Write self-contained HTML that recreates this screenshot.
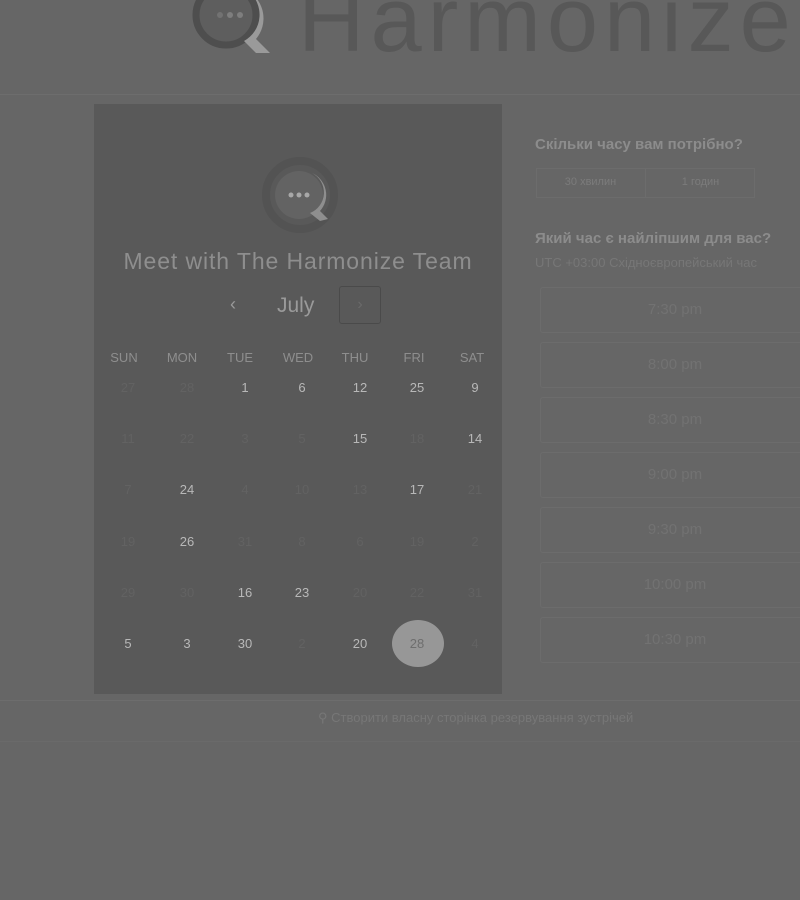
<!DOCTYPE html>
<html><head><meta charset="utf-8"><style>
body{margin:0;width:800px;height:900px;background:#666;font-family:"Liberation Sans",sans-serif;position:relative;overflow:hidden}
.a{position:absolute}
.panel{left:94px;top:104px;width:408px;height:590px;background:#595959}
.hd{font-size:13px;color:#8e8e8e;width:58px;text-align:center}
.d{font-size:13px;width:40px;text-align:center;color:#626262}
.b{color:#b8b8b8}
.slot{left:540px;width:270px;height:46px;border:1px solid #6c6c6c;border-radius:3px;box-sizing:border-box;color:#727272;font-size:15px;text-align:center;line-height:44px}
</style></head><body>
<svg class="a" style="left:178px;top:-25px" width="100" height="85"><circle cx="48" cy="40" r="30" fill="#5e5e5e" stroke="#4e4e4e" stroke-width="7"/><path d="M70 16 A32 32 0 0 1 78 64 L92 78 L78 78 L66 66 A30 30 0 0 0 70 16Z" fill="#9a9a9a"/><circle cx="42" cy="40" r="3" fill="#727272"/><circle cx="52" cy="40" r="3" fill="#7e7e7e"/><circle cx="62" cy="40" r="3" fill="#7e7e7e"/></svg>
<div class="a" style="left:298px;top:-32px;font-size:92px;color:#585858;letter-spacing:6px;white-space:nowrap">Harmonize</div>
<div class="a" style="left:0;top:94px;width:800px;height:1px;background:#6d6d6d"></div>
<div class="a" style="left:0;top:700px;width:800px;height:40px;border-top:1px solid #6d6d6d;border-bottom:1px solid #6a6a6a"></div>
<div class="a panel"></div>
<svg class="a" style="left:256px;top:155px" width="90" height="80"><circle cx="44" cy="40" r="34" fill="none" stroke="#535353" stroke-width="8"/><circle cx="43" cy="40" r="24" fill="#636363"/><path d="M56 18 A24 24 0 0 1 64 56 L72 64 L64 66 L54 58 A22 22 0 0 0 56 18Z" fill="#8e8e8e"/><circle cx="35" cy="40" r="2.5" fill="#a8a8a8"/><circle cx="43" cy="40" r="2.5" fill="#a8a8a8"/><circle cx="51" cy="40" r="2.5" fill="#a8a8a8"/></svg>
<div class="a" style="left:94px;top:248px;width:408px;text-align:center;font-size:23px;color:#8e8e8e;letter-spacing:0.9px;white-space:nowrap">Meet with The Harmonize Team</div>
<div class="a" style="left:230px;top:294px;font-size:18px;color:#9a9a9a">‹</div>
<div class="a" style="left:277px;top:294px;font-size:21px;color:#9a9a9a">July</div>
<div class="a" style="left:339px;top:286px;width:40px;height:36px;border:1.5px solid #4a4a4a;border-radius:3px;color:#6a6a6a;text-align:center;line-height:36px">›</div>
<div class="a hd" style="left:95px;top:350px">SUN</div><div class="a hd" style="left:153px;top:350px">MON</div><div class="a hd" style="left:211px;top:350px">TUE</div><div class="a hd" style="left:269px;top:350px">WED</div><div class="a hd" style="left:326px;top:350px">THU</div><div class="a hd" style="left:385px;top:350px">FRI</div><div class="a hd" style="left:443px;top:350px">SAT</div>
<div class="a" style="left:392px;top:620px;width:52px;height:47px;border-radius:50%;background:#979797"></div>
<div id="g"></div>
<script>
var rows=[[387,["27","28","1b","6b","12b","25b","9b"]],[438,["11","22","3","5","15b","18","14b"]],[489,["7","24b","4","10","13","17b","21"]],[541,["19","26b","31","8","6","19","2"]],[592,["29","30","16b","23b","20","22","31"]],[643,["5b","3b","30b","2","20b","28x","4"]]];
var xs=[108,167,225,282,340,397,455],h="";
rows.forEach(function(r){r[1].forEach(function(t,i){var c=t.slice(-1);var b=c=="b",x=c=="x";var n=(b||x)?t.slice(0,-1):t;h+='<div class="a d'+(b?' b':'')+'" style="left:'+xs[i]+'px;top:'+(r[0]-7)+'px'+(x?';color:#6e6e6e':'')+'">'+n+'</div>'});});
document.getElementById("g").innerHTML=h;
</script>
<div class="a" style="left:535px;top:136px;font-size:15px;font-weight:bold;color:#8c8c8c">Скільки часу вам потрібно?</div>
<div class="a" style="left:536px;top:168px;width:219px;height:30px;border:1px solid #6c6c6c;box-sizing:border-box"></div>
<div class="a" style="left:645px;top:168px;width:1px;height:30px;background:#6c6c6c"></div>
<div class="a" style="left:536px;top:176px;width:109px;text-align:center;font-size:11px;color:#7c7c7c">30 хвилин</div>
<div class="a" style="left:646px;top:176px;width:109px;text-align:center;font-size:11px;color:#7c7c7c">1 годин</div>
<div class="a" style="left:535px;top:230px;font-size:15px;font-weight:bold;color:#8c8c8c">Який час є найліпшим для вас?</div>
<div class="a" style="left:535px;top:255px;font-size:13px;color:#777;white-space:nowrap">UTC +03:00 Східноєвропейський час</div>
<div class="a slot" style="top:287px">7:30 pm</div>
<div class="a slot" style="top:342px">8:00 pm</div>
<div class="a slot" style="top:397px">8:30 pm</div>
<div class="a slot" style="top:452px">9:00 pm</div>
<div class="a slot" style="top:507px">9:30 pm</div>
<div class="a slot" style="top:562px">10:00 pm</div>
<div class="a slot" style="top:617px">10:30 pm</div>
<div class="a" style="left:318px;top:710px;font-size:13px;color:#777">⚲ Створити власну сторінка резервування зустрічей</div>
</body></html>
